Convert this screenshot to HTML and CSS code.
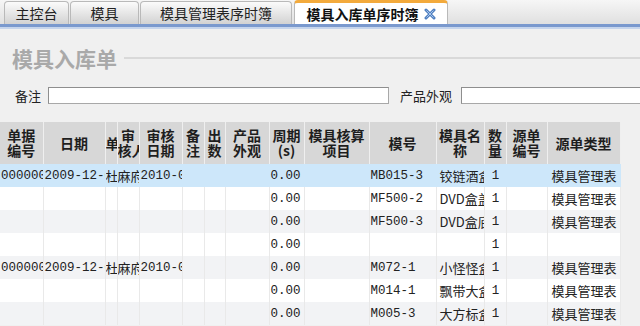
FILE: index.html
```html
<!DOCTYPE html>
<html lang="zh-CN">
<head>
  <meta charset="UTF-8">
  <title>模具入库单序时簿</title>
  <link rel="stylesheet" href="styles.css">
</head>
<body>
  <!-- Tab Bar -->
  <div class="tabbar">
    <div class="tab tab-home">主控台</div>
    <div class="tab tab-mold">模具</div>
    <div class="tab tab-list">模具管理表序时簿</div>
    <div class="tab tab-active">
      模具入库单序时簿
      <svg class="close-icon" width="12" height="12" viewBox="0 0 12 12">
        <path d="M2 2 L10 10 M10 2 L2 10" stroke="#4f7fc0" stroke-width="3" stroke-linecap="round"/>
        <path d="M2.5 2.5 L9.5 9.5 M9.5 2.5 L2.5 9.5" stroke="#a9c6ec" stroke-width="1"/>
      </svg>
    </div>
  </div>
  <div class="tabline"></div>

  <!-- Title -->
  <div class="title-row">
    <h1>模具入库单</h1>
    <div class="rule"></div>
  </div>

  <!-- Filter Fields -->
  <div class="form-row">
    <label class="field-label">备注</label>
    <input class="field-input note-input" type="text">
    <label class="field-label look-label">产品外观</label>
    <input class="field-input look-input" type="text">
  </div>

  <!-- Grid -->
  <table class="grid">
    <colgroup>
      <col style="width:43px"><col style="width:62px"><col style="width:12px"><col style="width:22px">
      <col style="width:43px"><col style="width:22px"><col style="width:21px"><col style="width:44px">
      <col style="width:35px"><col style="width:65px"><col style="width:67px"><col style="width:48px">
      <col style="width:22px"><col style="width:41px"><col style="width:73px">
    </colgroup>
    <thead>
      <tr>
        <th>单据<br>编号</th>
        <th>日期</th>
        <th>单</th>
        <th>审<br>核人</th>
        <th>审核<br>日期</th>
        <th>备<br>注</th>
        <th>出<br>数</th>
        <th>产品<br>外观</th>
        <th>周期<br>(s)</th>
        <th>模具核算<br>项目</th>
        <th>模号</th>
        <th>模具名<br>称</th>
        <th>数<br>量</th>
        <th>源单<br>编号</th>
        <th>源单类型</th>
      </tr>
    </thead>
    <tbody>
      <tr class="selected">
        <td>0000001</td><td>2009-12-05</td><td class="cn name">杜麻</td><td class="cn name">麻府</td><td>2010-01-06</td>
        <td></td><td></td><td></td><td class="num">0.00</td><td></td>
        <td>MB015-3</td><td class="cn">铰链酒盒</td><td class="qty">1</td><td></td><td class="cn type">模具管理表</td>
      </tr>
      <tr>
        <td></td><td></td><td></td><td></td><td></td>
        <td></td><td></td><td></td><td class="num">0.00</td><td></td>
        <td>MF500-2</td><td class="cn">DVD盒盖</td><td class="qty">1</td><td></td><td class="cn type">模具管理表</td>
      </tr>
      <tr>
        <td></td><td></td><td></td><td></td><td></td>
        <td></td><td></td><td></td><td class="num">0.00</td><td></td>
        <td>MF500-3</td><td class="cn">DVD盒底</td><td class="qty">1</td><td></td><td class="cn type">模具管理表</td>
      </tr>
      <tr>
        <td></td><td></td><td></td><td></td><td></td>
        <td></td><td></td><td></td><td class="num">0.00</td><td></td>
        <td></td><td></td><td class="qty">1</td><td></td><td></td>
      </tr>
      <tr>
        <td>0000002</td><td>2009-12-08</td><td class="cn name">杜麻</td><td class="cn name">麻府</td><td>2010-01-06</td>
        <td></td><td></td><td></td><td class="num">0.00</td><td></td>
        <td>M072-1</td><td class="cn">小怪怪盒</td><td class="qty">1</td><td></td><td class="cn type">模具管理表</td>
      </tr>
      <tr>
        <td></td><td></td><td></td><td></td><td></td>
        <td></td><td></td><td></td><td class="num">0.00</td><td></td>
        <td>M014-1</td><td class="cn">飘带大盒</td><td class="qty">1</td><td></td><td class="cn type">模具管理表</td>
      </tr>
      <tr>
        <td></td><td></td><td></td><td></td><td></td>
        <td></td><td></td><td></td><td class="num">0.00</td><td></td>
        <td>M005-3</td><td class="cn">大方标盒</td><td class="qty">1</td><td></td><td class="cn type">模具管理表</td>
      </tr>
    </tbody>
  </table>
</body>
</html>
```

FILE: styles.css
```css
body {
  margin: 0;
  width: 640px;
  height: 326px;
  overflow: hidden;
  background: #f0f0f0;
  color: #222222;
  font-family: "Noto Sans CJK SC", sans-serif;
  font-size: 13px;
}

/* Tab Bar */
.tabbar {
  display: flex;
  align-items: flex-end;
  gap: 1px;
  height: 24px;
  padding-left: 4px;
  background: linear-gradient(#f6f6f6, #e0e0e0);
}

.tab {
  display: flex;
  align-items: center;
  justify-content: center;
  height: 23px;
  box-sizing: border-box;
  font-size: 14px;
  line-height: 16px;
  color: #222222;
  background: linear-gradient(#fbfbfb, #d2d2d2);
  border: 1px solid #b9b9b9;
  border-bottom: none;
  border-radius: 4px 4px 0 0;
}

.tab-home { width: 65px; }
.tab-mold { width: 69px; }
.tab-list { width: 152px; margin-right: 1px; }

.tab-active {
  width: 154px;
  gap: 5px;
  background: #ffffff;
  border-top: 3px solid #f3aa3c;
  font-weight: bold;
  color: #111111;
  height: 24px;
}

.close-icon {
  flex-shrink: 0;
}

.tabline {
  height: 3px;
  background: #7a99ce;
  border-bottom: 2px solid #c6d5ec;
}

/* Title */
.title-row {
  display: flex;
  align-items: center;
  padding: 17px 0 0 12px;
}

.title-row h1 {
  margin: 0;
  font-size: 21px;
  line-height: 24px;
  font-weight: bold;
  color: #a9a9a9;
}

.rule {
  flex: 1;
  height: 2px;
  margin-left: 7px;
  background: #d9d9d9;
}

/* Filter Fields */
.form-row {
  display: flex;
  align-items: center;
  height: 17px;
  margin-top: 17px;
  padding-left: 15px;
  white-space: nowrap;
}

.field-label {
  font-size: 13px;
  line-height: 17px;
  margin-right: 7px;
}

.look-label {
  margin-left: 11px;
  margin-right: 9px;
}

.field-input {
  flex-shrink: 0;
  height: 17px;
  box-sizing: border-box;
  margin: 0;
  padding: 0;
  background: #ffffff;
  border: 1px solid #a8a8a8;
  border-top-color: #8e8e8e;
  border-left-color: #8e8e8e;
}

.note-input { width: 341px; }
.look-input { width: 200px; }

/* Grid */
.grid {
  margin-top: 18px;
  width: 620px;
  table-layout: fixed;
  border-collapse: collapse;
}

.grid th {
  height: 42px;
  padding: 0;
  background: #d7d7d7;
  border-right: 1px solid #efefef;
  font-size: 14px;
  line-height: 15px;
  font-weight: bold;
  color: #1e1e1e;
  text-align: center;
  white-space: nowrap;
  overflow: hidden;
}

.grid td {
  height: 23px;
  padding: 0 0 0 1px;
  border-right: 1px solid #e9e9e9;
  font-family: "Liberation Mono", "Noto Sans CJK SC", monospace;
  font-size: 12.5px;
  white-space: nowrap;
  overflow: hidden;
  background: #ffffff;
}

.grid tbody tr:nth-child(odd) td {
  background: #f2f3f5;
}

.grid tbody tr.selected td {
  background: #cde7fa;
  border-right-color: #cde7fa;
}

.grid td.cn {
  font-family: "Noto Sans CJK SC", sans-serif;
  font-size: 13px;
  padding-left: 3px;
}

.grid td.name {
  padding-left: 0;
}

.grid td.num {
  text-align: right;
  padding-right: 3px;
}

.grid td.qty {
  text-align: center;
}

.grid td.type {
  padding-left: 4px;
}
```
